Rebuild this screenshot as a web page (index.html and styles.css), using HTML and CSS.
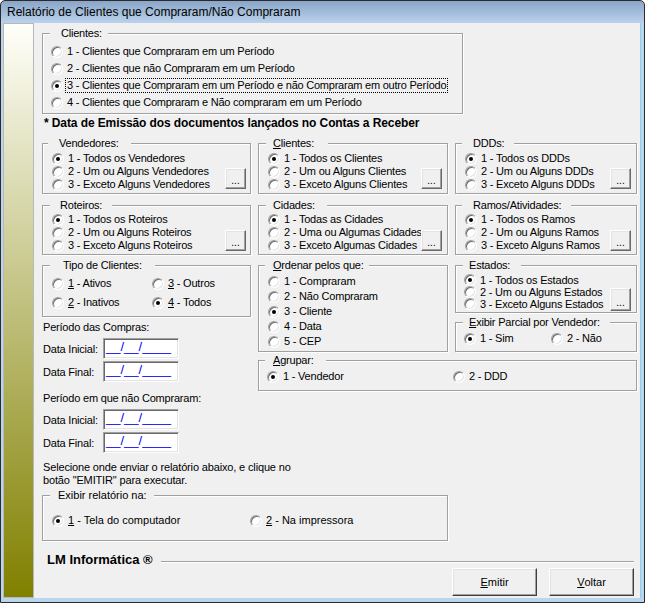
FILE: index.html
```html
<!DOCTYPE html>
<html lang="pt-BR">
<head>
<meta charset="utf-8">
<title>Relatório de Clientes que Compraram/Não Compraram</title>
<link rel="stylesheet" href="styles.css">
</head>
<body>
<div class="window">
  <div class="titlebar">Relatório de Clientes que Compraram/Não Compraram</div>
  <div class="client">
    <div class="strip"></div>
    <div class="content">

      <div class="grp g-top">
        <span class="lg lg-top">Clientes:</span>
        <div class="opt r17"><span class="radio"></span><span class="t">1 - Clientes que Compraram em um Período</span></div>
        <div class="opt r17"><span class="radio"></span><span class="t">2 - Clientes que não Compraram em um Período</span></div>
        <div class="opt r17"><span class="radio on"></span><span class="t focus">3 - Clientes que Compraram em um Período e não Compraram em outro Período</span></div>
        <div class="opt r17"><span class="radio"></span><span class="t">4 - Clientes que Compraram e Não compraram em um Período</span></div>
      </div>

      <div class="note">* Data de Emissão dos documentos lançados no Contas a Receber</div>

      <div class="grid3 ms">
        <div class="grp sel c1">
          <span class="lg lg-vend">Vendedores:</span>
          <div class="opts">
            <div class="opt r13"><span class="radio on"></span><span class="t">1 - Todos os Vendedores</span></div>
            <div class="opt r13"><span class="radio"></span><span class="t">2 - Um ou Alguns Vendedores</span></div>
            <div class="opt r13"><span class="radio"></span><span class="t">3 - Exceto Alguns Vendedores</span></div>
          </div>
          <span class="dots">...</span>
        </div>
        <div class="grp sel">
          <span class="lg lg-cli"><u>C</u>lientes:</span>
          <div class="opts">
            <div class="opt r13"><span class="radio on"></span><span class="t">1 - Todos os Clientes</span></div>
            <div class="opt r13"><span class="radio"></span><span class="t">2 - Um ou Alguns Clientes</span></div>
            <div class="opt r13"><span class="radio"></span><span class="t">3 - Exceto Alguns Clientes</span></div>
          </div>
          <span class="dots">...</span>
        </div>
        <div class="grp sel">
          <span class="lg lg-ddd">DDDs:</span>
          <div class="opts">
            <div class="opt r13"><span class="radio on"></span><span class="t">1 - Todos os DDDs</span></div>
            <div class="opt r13"><span class="radio"></span><span class="t">2 - Um ou Alguns DDDs</span></div>
            <div class="opt r13"><span class="radio"></span><span class="t">3 - Exceto Alguns DDDs</span></div>
          </div>
          <span class="dots">...</span>
        </div>

        <div class="grp sel rowb c1">
          <span class="lg lg-rot">Roteiros:</span>
          <div class="opts">
            <div class="opt r13"><span class="radio on"></span><span class="t">1 - Todos os Roteiros</span></div>
            <div class="opt r13"><span class="radio"></span><span class="t">2 - Um ou Alguns Roteiros</span></div>
            <div class="opt r13"><span class="radio"></span><span class="t">3 - Exceto Alguns Roteiros</span></div>
          </div>
          <span class="dots">...</span>
        </div>
        <div class="grp sel rowb">
          <span class="lg lg-cid">Cidades:</span>
          <div class="opts">
            <div class="opt r13"><span class="radio on"></span><span class="t">1 - Todas as Cidades</span></div>
            <div class="opt r13"><span class="radio"></span><span class="t">2 - Uma ou Algumas Cidades</span></div>
            <div class="opt r13"><span class="radio"></span><span class="t">3 - Exceto Algumas Cidades</span></div>
          </div>
          <span class="dots">...</span>
        </div>
        <div class="grp sel rowb">
          <span class="lg lg-ram">Ramos/Atividades:</span>
          <div class="opts">
            <div class="opt r13"><span class="radio on"></span><span class="t">1 - Todos os Ramos</span></div>
            <div class="opt r13"><span class="radio"></span><span class="t">2 - Um ou Alguns Ramos</span></div>
            <div class="opt r13"><span class="radio"></span><span class="t">3 - Exceto Alguns Ramos</span></div>
          </div>
          <span class="dots">...</span>
        </div>
      </div>

      <div class="lower ms">
        <div class="leftstack">
          <div class="grp tipo">
            <span class="lg lg-tipo">Tipo de Clientes:</span>
            <div class="opt"><span class="radio"></span><span class="t"><u>1</u> - Ativos</span></div>
            <div class="opt"><span class="radio"></span><span class="t"><u>3</u> - Outros</span></div>
            <div class="opt"><span class="radio"></span><span class="t"><u>2</u> - Inativos</span></div>
            <div class="opt"><span class="radio on"></span><span class="t"><u>4</u> - Todos</span></div>
          </div>
          <div class="ptitle p1">Período das Compras:</div>
          <div class="drow"><span class="dlabel">Data Inicial:</span><span class="date">__/__/____</span></div>
          <div class="drow"><span class="dlabel">Data Final:</span><span class="date">__/__/____</span></div>
          <div class="ptitle p2">Período em que não Compraram:</div>
          <div class="drow"><span class="dlabel">Data Inicial:</span><span class="date">__/__/____</span></div>
          <div class="drow"><span class="dlabel">Data Final:</span><span class="date">__/__/____</span></div>
        </div>

        <div class="rightblock">
          <div class="grp ordenar">
            <span class="lg lg-ord"><u>O</u>rdenar pelos que:</span>
            <div class="opt r15"><span class="radio"></span><span class="t">1 - Compraram</span></div>
            <div class="opt r15"><span class="radio"></span><span class="t">2 - Não Compraram</span></div>
            <div class="opt r15"><span class="radio on"></span><span class="t">3 - Cliente</span></div>
            <div class="opt r15"><span class="radio"></span><span class="t">4 - Data</span></div>
            <div class="opt r15"><span class="radio"></span><span class="t">5 - CEP</span></div>
          </div>
          <div class="grp sel estados">
            <span class="lg lg-est">Estados:</span>
            <div class="opts">
              <div class="opt r12"><span class="radio on"></span><span class="t">1 - Todos os Estados</span></div>
              <div class="opt r12"><span class="radio"></span><span class="t">2 - Um ou Alguns Estados</span></div>
              <div class="opt r12"><span class="radio"></span><span class="t">3 - Exceto Alguns Estados</span></div>
            </div>
            <span class="dots tall">...</span>
          </div>
          <div class="grp parcial">
            <span class="lg lg-par"><u>E</u>xibir Parcial por Vendedor:</span>
            <div class="opt"><span class="radio on"></span><span class="t">1 - Sim</span></div>
            <div class="opt"><span class="radio"></span><span class="t">2 - Não</span></div>
          </div>
          <div class="grp agrupar">
            <span class="lg lg-agr"><u>A</u>grupar:</span>
            <div class="opt"><span class="radio on"></span><span class="t">1 - Vendedor</span></div>
            <div class="opt"><span class="radio"></span><span class="t">2 - DDD</span></div>
          </div>
        </div>
      </div>

      <div class="hint">Selecione onde enviar o relatório abaixo, e clique no<br>botão "EMITIR" para executar.</div>

      <div class="grp saida">
        <span class="lg lg-sai">Exibir relatório na:</span>
        <div class="opt"><span class="radio on"></span><span class="t"><u>1</u> - Tela do computador</span></div>
        <div class="opt"><span class="radio"></span><span class="t"><u>2</u> - Na impressora</span></div>
      </div>

      <div class="footer">
        <div class="brand"><span class="brandname">LM Informática ®</span><span class="rule"></span></div>
        <div class="buttons">
          <span class="btn"><u>E</u>mitir</span>
          <span class="btn"><u>V</u>oltar</span>
        </div>
      </div>

    </div>
  </div>
</div>
</body>
</html>
```

FILE: styles.css
```css
* { box-sizing: border-box; }

html, body {
  margin: 0;
  padding: 0;
}

body {
  width: 645px;
  height: 603px;
  overflow: hidden;
  font-family: "Liberation Sans", Arial, sans-serif;
  font-size: 11px;
  color: #000;
  background: #fff;
}

.window {
  width: 645px;
  height: 603px;
  border: 1px solid #2b2b2b;
  border-radius: 5px 5px 0 0;
  background: linear-gradient(to bottom, #8aa5c8 0px, #bad2eb 22px, #bcd5ee 22px, #bcd5ee 100%);
  display: flex;
  flex-direction: column;
}

.titlebar {
  height: 22px;
  line-height: 22px;
  padding-left: 6px;
  font-size: 12px;
  white-space: nowrap;
}

.client {
  flex: 1;
  display: flex;
  margin: 0 3px 4px 2px;
  background: #f0f0f0;
  border-right: 1px solid #8fd0f0;
}

.strip {
  width: 31px;
  flex: none;
  border: 1px solid #b8b8b8;
  background: linear-gradient(to bottom, #fffffa 0%, #808000 100%);
}

.content {
  flex: 1;
  padding: 10px 3px 0 8px;
  display: flex;
  flex-direction: column;
}

/* group boxes */
.grp {
  position: relative;
  border: 1px solid #a0a0a0;
  box-shadow: inset 1px 1px 0 #fff, 1px 1px 0 #fff;
}

.lg {
  position: absolute;
  top: -8px;
  left: 6px;
  line-height: 14px;
  background: #f0f0f0;
  white-space: nowrap;
}

.lg-top { left: 7px; padding: 0 6px 0 11px; }
.lg-vend { left: 5px; padding: 0 12px 0 11px; }
.lg-cli { left: 7px; padding: 0 14px 0 7px; }
.lg-ddd { left: 6px; padding: 0 10px 0 11px; }
.lg-rot { left: 7px; padding: 0 10px 0 10px; }
.lg-cid { left: 7px; padding: 0 12px 0 7px; }
.lg-ram { left: 6px; padding: 0 10px 0 11px; }
.lg-tipo { left: 7px; padding: 0 13px 0 13px; }
.lg-ord { left: 6px; padding: 0 5px 0 8px; }
.lg-est { left: 7px; padding: 0 11px 0 6px; }
.lg-par { left: 7px; padding: 0 10px 0 6px; }
.lg-agr { left: 6px; padding: 0 12px 0 8px; }
.lg-sai { left: 7px; padding: 0 7px 0 8px; }

/* radio options */
.opt {
  display: flex;
  align-items: center;
  white-space: nowrap;
}

.r17 { height: 17px; }
.r15 { height: 15px; }
.r13 { height: 13px; }
.r12 { height: 12px; }

.radio {
  position: relative;
  flex: none;
  width: 12px;
  height: 12px;
  margin-right: 4px;
  border-radius: 50%;
  border: 1px solid;
  border-color: #a0a0a0 #ffffff #ffffff #a0a0a0;
  background: #fff;
  box-shadow: inset 1px 1px 0 #6d6d6d, inset -1px -1px 0 #e3e3e3;
}

.radio.on::after {
  content: "";
  position: absolute;
  left: 3px;
  top: 3px;
  width: 4px;
  height: 4px;
  border-radius: 50%;
  background: #000;
}

.t { line-height: 13px; }

.focus {
  outline: 1px dotted #000;
  outline-offset: 0;
  padding: 0 1px;
  margin-left: -1px;
}

.ms .t, .ms .lg, .ms .dlabel, .ms .ptitle {
  letter-spacing: -0.2px;
}

/* top group */
.g-top {
  width: 421px;
  height: 81px;
  padding: 9px 0 0 8px;
  letter-spacing: -0.23px;
}

.note {
  margin-top: 2px;
  height: 14px;
  line-height: 14px;
  font-size: 12px;
  font-weight: bold;
  padding-left: 2px;
  white-space: nowrap;
  letter-spacing: -0.1px;
}

/* 3 column grid */
.grid3 {
  display: grid;
  grid-template-columns: 209px 190px 182px;
  grid-template-rows: 51px 50px;
  column-gap: 7px;
  row-gap: 11px;
  margin-top: 13px;
}

.sel {
  display: flex;
  padding: 8px 5px 4px 9px;
}

.sel.c1 { padding-right: 4px; }
.sel.rowb { padding-top: 7px; padding-bottom: 3px; }

.opts { flex: 1; min-width: 0; }

.dots {
  flex: none;
  align-self: flex-end;
  width: 21px;
  height: 21px;
  border: 1px solid;
  border-color: #ffffff #696969 #696969 #ffffff;
  box-shadow: inset -1px -1px 0 #a0a0a0, inset 1px 1px 0 #e3e3e3;
  background: #f0f0f0;
  font-size: 10px;
  line-height: 10px;
  text-align: center;
  padding-top: 7px;
  letter-spacing: 0;
}

.dots.tall { height: 23px; padding-top: 9px; }

/* lower area */
.lower {
  display: flex;
  gap: 7px;
  margin-top: 10px;
}

.leftstack {
  width: 209px;
  flex: none;
  display: flex;
  flex-direction: column;
}

.tipo {
  height: 52px;
  display: grid;
  grid-template-columns: 100px auto;
  grid-auto-rows: 19px;
  padding: 8px 0 0 9px;
}

.ptitle {
  height: 14px;
  line-height: 14px;
  padding-left: 1px;
  white-space: nowrap;
}

.p1 { margin-top: 3px; }
.p2 { margin-top: 9px; }

.drow {
  display: flex;
  align-items: center;
  margin-top: 2px;
}

.ptitle + .drow { margin-top: 4px; }

.dlabel {
  width: 61px;
  padding-left: 1px;
  white-space: nowrap;
}

.date {
  width: 76px;
  height: 21px;
  border: 1px solid;
  border-color: #a0a0a0 #ffffff #ffffff #a0a0a0;
  box-shadow: inset 1px 1px 0 #696969, inset -1px -1px 0 #e3e3e3;
  background: #fff;
  color: #0000ff;
  font-size: 13px;
  line-height: 15px;
  padding-left: 2px;
  letter-spacing: 0;
}

.rightblock {
  width: 379px;
  flex: none;
  display: grid;
  grid-template-columns: 190px 182px;
  grid-template-rows: 48px 30px 30px;
  column-gap: 7px;
  row-gap: 9px;
}

.ordenar {
  grid-column: 1;
  grid-row: 1 / span 2;
  padding: 8px 0 0 9px;
}

.estados {
  grid-column: 2;
  grid-row: 1;
  padding: 8px 5px 1px 8px;
}

.parcial {
  grid-column: 2;
  grid-row: 2;
  display: grid;
  grid-template-columns: 87px auto;
  padding: 8px 0 0 8px;
}

.parcial .opt, .agrupar .opt { height: 15px; }

.agrupar {
  grid-column: 1 / span 2;
  grid-row: 3;
  margin-top: -1px;
  display: grid;
  grid-template-columns: 186px auto;
  padding: 8px 0 0 8px;
}

/* bottom */
.hint {
  margin-top: 8px;
  line-height: 13px;
  padding-left: 1px;
  white-space: nowrap;
  letter-spacing: -0.15px;
}

.saida {
  margin-top: 8px;
  width: 406px;
  height: 46px;
  display: grid;
  grid-template-columns: 198px auto;
  padding: 17px 0 0 9px;
}

.saida .opt { height: 15px; }

.footer {
  margin-top: 12px;
  display: flex;
  flex-direction: column;
}

.brand {
  display: flex;
  align-items: center;
  height: 14px;
  padding-left: 5px;
}

.brandname {
  font-size: 13px;
  font-weight: bold;
  line-height: 14px;
  white-space: nowrap;
  margin-right: 8px;
}

.rule {
  flex: 1;
  height: 2px;
  margin-top: 3px;
  margin-right: 3px;
  border-top: 1px solid #a0a0a0;
  border-bottom: 1px solid #ffffff;
}

.buttons {
  display: flex;
  justify-content: flex-end;
  gap: 12px;
  margin-top: 1px;
  padding-right: 3px;
}

.btn {
  width: 85px;
  height: 28px;
  border: 1px solid;
  border-color: #ffffff #404040 #404040 #ffffff;
  box-shadow: inset -1px -1px 0 #a0a0a0, inset 1px 1px 0 #e3e3e3;
  background: #f0f0f0;
  display: flex;
  align-items: center;
  justify-content: center;
}
```
